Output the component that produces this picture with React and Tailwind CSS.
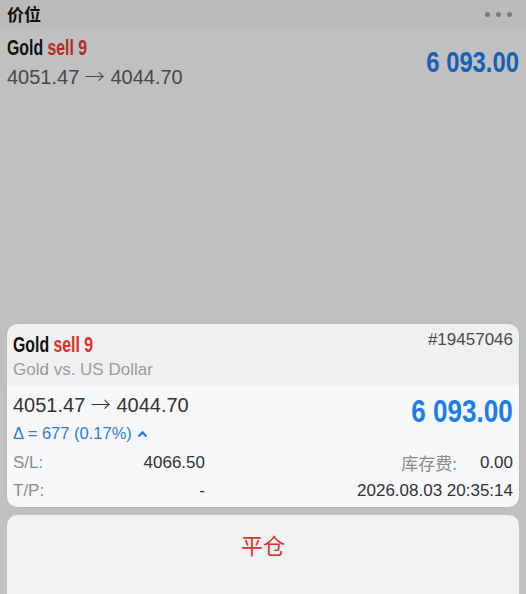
import React from "react";

const sans = { fontFamily: '"Liberation Sans", Arial, "Noto Sans CJK SC", sans-serif' };
const cjk = { fontFamily: '"Noto Sans CJK SC", sans-serif' };

function Title({ sellColor }) {
  return (
    <div className="text-[22px] leading-[24px] font-bold text-[#111] scale-x-[0.72] origin-left whitespace-nowrap">
      Gold <span style={{ color: sellColor }}>sell 9</span>
    </div>
  );
}

function Arrow() {
  return (
    <span className="font-light" style={cjk}>
      →
    </span>
  );
}

export default function App() {
  return (
    <div className="w-[526px] h-[594px] overflow-hidden flex flex-col bg-[#c0c0c0]" style={sans}>
      {/* header */}
      <div className="h-[28px] shrink-0 bg-[#bbbbbb] flex items-center justify-between pl-[7px] pr-[14px]">
        <span className="text-[17px] font-bold text-[#111]" style={cjk}>
          价位
        </span>
        <div className="flex gap-[6px]">
          <span className="w-[5px] h-[5px] rounded-full bg-[#7a7a7a]" />
          <span className="w-[5px] h-[5px] rounded-full bg-[#7a7a7a]" />
          <span className="w-[5px] h-[5px] rounded-full bg-[#7a7a7a]" />
        </div>
      </div>

      {/* list item */}
      <div className="flex items-center justify-between pl-[7px] pr-[7px] pt-[8px]">
        <div className="flex flex-col gap-[4px]">
          <Title sellColor="#b02c2a" />
          <div className="text-[20px] leading-[24px] text-[#474747] whitespace-nowrap">
            4051.47 <Arrow /> 4044.70
          </div>
        </div>
        <div className="text-[29px] leading-[34px] font-bold text-[#1760b8] scale-x-[0.82] origin-right whitespace-nowrap mb-[2px]">
          6 093.00
        </div>
      </div>

      <div className="flex-1" />

      {/* card */}
      <div className="mx-[7px] rounded-[10px] overflow-hidden shadow-[0_0_2px_rgba(0,0,0,0.12)] shrink-0">
        <div className="bg-[#eff0f1] pl-[6px] pr-[6px] pt-[6px] pb-[5px]">
          <div className="flex justify-between items-start">
            <div className="pt-[3px]">
              <Title sellColor="#df3129" />
            </div>
            <div className="text-[17px] leading-[20px] text-[#4a4a4a]">#19457046</div>
          </div>
          <div className="text-[17px] leading-[20px] text-[#9b9b9b] mt-[3px]">Gold vs. US Dollar</div>
        </div>
        <div className="bg-[#f6f7f8] pl-[6px] pr-[6px] pt-[7px] pb-[5px]">
          <div className="flex justify-between items-start">
            <div className="flex flex-col gap-[6px]">
              <div className="text-[20px] leading-[24px] text-[#333] whitespace-nowrap">
                4051.47 <Arrow /> 4044.70
              </div>
              <div className="flex items-center gap-[5px] text-[16.5px] leading-[20px] text-[#2a7de0]">
                <span>Δ = 677 (0.17%)</span>
                <svg width="11" height="8" viewBox="0 0 11 8" className="mt-[1px]">
                  <path d="M1.5 6.5 L5.5 2.5 L9.5 6.5" fill="none" stroke="#2a7de0" strokeWidth="2.4" />
                </svg>
              </div>
            </div>
            <div className="text-[31px] leading-[34px] font-bold text-[#1b7de9] pt-[3px] scale-x-[0.84] origin-right whitespace-nowrap">
              6 093.00
            </div>
          </div>
          <div className="mt-[9px] flex flex-col gap-[6px] text-[17px] leading-[22px]">
            <div className="flex items-center">
              <span className="w-[50px] text-[#8c8c8c]">S/L:</span>
              <span className="w-[142px] text-right text-[#333]">4066.50</span>
              <span className="flex-1 text-right text-[#8c8c8c]" style={cjk}>
                库存费:
              </span>
              <span className="w-[56px] text-right text-[#333]">0.00</span>
            </div>
            <div className="flex items-center">
              <span className="w-[50px] text-[#8c8c8c]">T/P:</span>
              <span className="w-[142px] text-right text-[#333]">-</span>
              <span className="flex-1 text-right text-[#333]">2026.08.03 20:35:14</span>
            </div>
          </div>
        </div>
      </div>

      {/* close button */}
      <div className="mx-[7px] mt-[8px] h-[79px] shrink-0 rounded-t-[10px] bg-[#f0f1f2] flex justify-center pt-[16px]">
        <span className="text-[22px] leading-[26px] text-[#d8322f]" style={cjk}>
          平仓
        </span>
      </div>
    </div>
  );
}
